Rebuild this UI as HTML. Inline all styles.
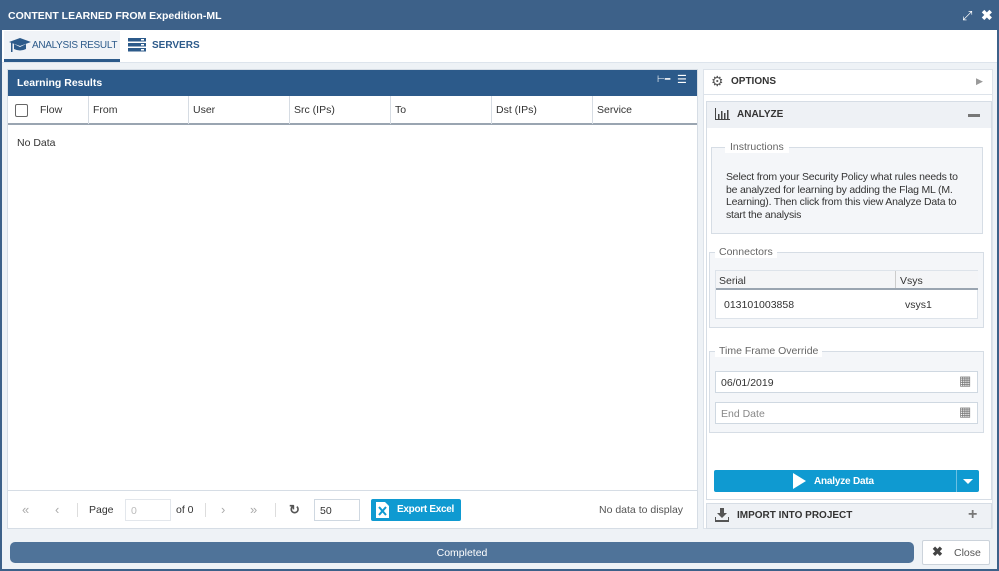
<!DOCTYPE html>
<html><head><style>
*{box-sizing:border-box;margin:0;padding:0}
body{width:999px;height:571px;overflow:hidden;font-family:"Liberation Sans",sans-serif;font-size:10.5px;color:#333;background:#fff;position:relative}
.a{position:absolute;white-space:nowrap}
.frame{left:0;top:0;width:999px;height:571px;border:2px solid #3d6189;border-top:none;background:#eef2f6}
.title{left:0;top:0;width:999px;height:30px;background:#3d6189;color:#fff;font-weight:bold;font-size:10.5px;padding:10px 0 0 8px}
.tabs{left:2px;top:30px;width:995px;height:33px;background:#fff;border-bottom:1px solid #dde4ec}
.col{position:absolute;top:0;height:28px;border-right:1px solid #d6dce3;padding:8px 0 0 4px}
.box{background:#fff;border:1px solid #d6dde5}
.field{position:absolute;border:1px solid #cfd8e1;background:#fff;height:22px;padding:5px 0 0 5px;white-space:nowrap}
</style></head><body>
<div class="a frame"></div>
<div class="a title">CONTENT LEARNED FROM Expedition-ML</div>
<div class="a" style="left:962px;top:8px;color:#fff;font-size:13px">⤢</div>
<div class="a" style="left:981px;top:7px;color:#fff;font-size:14px;font-weight:bold">✖</div>
<div class="a tabs"></div>
<div class="a" style="left:4px;top:31px;width:116px;height:31px;background:#f0f3f7;border-bottom:3px solid #2c5a8a"></div>
<svg class="a" style="left:9px;top:37px" width="22" height="16" viewBox="0 0 22 16"><path d="M11 1 L22 5 L11 9 L0 5Z" fill="#2c5a8a"/><path d="M5 7 V12 Q11 15 17 12 V7 L11 10Z" fill="#2c5a8a"/><rect x="2" y="5" width="1.5" height="10" fill="#2c5a8a"/></svg>
<div class="a" style="left:32px;top:40px;color:#2c5a8a;font-size:10px;letter-spacing:-0.3px">ANALYSIS RESULT</div>
<svg class="a" style="left:128px;top:38px" width="18" height="14"><rect x="0" y="0" width="18" height="3.5" fill="#2c5a8a"/><rect x="0" y="5" width="18" height="3.5" fill="#2c5a8a"/><rect x="0" y="10" width="18" height="3.5" fill="#2c5a8a"/><rect x="13" y="1" width="3" height="1.5" fill="#fff"/><rect x="13" y="6" width="3" height="1.5" fill="#fff"/><rect x="13" y="11" width="3" height="1.5" fill="#fff"/></svg>
<div class="a" style="left:152px;top:40px;color:#2c5a8a;font-size:10px;font-weight:bold">SERVERS</div>

<div class="a box" style="left:7px;top:69px;width:691px;height:460px"></div>
<div class="a" style="left:8px;top:70px;width:689px;height:26px;background:#2c5a8a;color:#fff;font-weight:bold;padding:7px 0 0 9px">Learning Results</div>
<div class="a" style="left:657px;top:74px;color:#fff;font-size:9px">⊢━</div>
<div class="a" style="left:677px;top:73px;color:#fff;font-size:11px">☰</div>
<div class="a" style="left:8px;top:96px;width:689px;height:29px;border-bottom:2px solid #9aa5b1;background:#fff">
 <div class="col" style="left:0;width:81px;padding-left:32px">Flow</div>
 <div class="a" style="left:7px;top:8px;width:13px;height:13px;border:1px solid #666;border-radius:2px"></div>
 <div class="col" style="left:81px;width:100px">From</div>
 <div class="col" style="left:181px;width:101px">User</div>
 <div class="col" style="left:282px;width:101px">Src (IPs)</div>
 <div class="col" style="left:383px;width:101px">To</div>
 <div class="col" style="left:484px;width:101px">Dst (IPs)</div>
 <div class="col" style="left:585px;width:104px;border-right:none">Service</div>
</div>
<div class="a" style="left:17px;top:137px">No Data</div>
<div class="a" style="left:8px;top:490px;width:689px;height:38px;border-top:1px solid #d6dde5;background:#fff"></div>
<div class="a" style="left:22px;top:502px;color:#aaa;font-size:13px">«</div>
<div class="a" style="left:55px;top:502px;color:#aaa;font-size:13px">‹</div>
<div class="a" style="left:77px;top:503px;width:1px;height:14px;background:#ddd"></div>
<div class="a" style="left:89px;top:504px">Page</div>
<div class="field" style="left:125px;top:499px;width:46px;color:#bbb;border-color:#e3e7ec">0</div>
<div class="a" style="left:176px;top:504px">of 0</div>
<div class="a" style="left:205px;top:503px;width:1px;height:14px;background:#ddd"></div>
<div class="a" style="left:221px;top:502px;color:#aaa;font-size:13px">›</div>
<div class="a" style="left:250px;top:502px;color:#aaa;font-size:13px">»</div>
<div class="a" style="left:275px;top:503px;width:1px;height:14px;background:#ddd"></div>
<div class="a" style="left:289px;top:502px;color:#555;font-size:13px;font-weight:bold">↻</div>
<div class="field" style="left:314px;top:499px;width:46px;color:#333">50</div>
<div class="a" style="left:371px;top:499px;width:90px;height:22px;background:#0f9ad1;border-radius:2px;color:#fff;font-weight:bold;font-size:10px;letter-spacing:-0.3px;padding:5px 0 0 26px">Export Excel</div>
<svg class="a" style="left:376px;top:502px" width="13" height="16"><path d="M0 0H9L13 4V16H0Z" fill="#fff"/><path d="M3 5L10 13M10 5L3 13" stroke="#0f9ad1" stroke-width="2"/></svg>
<div class="a" style="left:599px;top:504px;color:#555">No data to display</div>

<div class="a" style="left:703px;top:69px;width:290px;height:460px;background:#fff;border:1px solid #dde3ea"></div>
<div class="a" style="left:704px;top:70px;width:288px;height:25px;background:#fff;border-bottom:1px solid #dde3ea"></div>
<div class="a" style="left:711px;top:73px;color:#555;font-size:14px">⚙</div>
<div class="a" style="left:731px;top:76px;font-weight:bold;color:#333;font-size:10px">OPTIONS</div>
<div class="a" style="left:976px;top:76px;color:#999;font-size:9px">▶</div>
<div class="a" style="left:706px;top:101px;width:286px;height:399px;border:1px solid #d6dde5;background:#fff"></div>
<div class="a" style="left:707px;top:102px;width:284px;height:26px;background:#eef1f5"></div>
<svg class="a" style="left:715px;top:108px" width="15" height="12"><path d="M0.5 0V11.5H15" stroke="#444" fill="none"/><rect x="3" y="6" width="1.5" height="5" fill="#444"/><rect x="6" y="3" width="1.5" height="8" fill="#444"/><rect x="9" y="5" width="1.5" height="6" fill="#444"/><rect x="12" y="2" width="1.5" height="9" fill="#444"/></svg>
<div class="a" style="left:737px;top:109px;font-weight:bold;font-size:10px">ANALYZE</div>
<div class="a" style="left:968px;top:114px;width:12px;height:3px;background:#777"></div>

<div class="a" style="left:711px;top:147px;width:272px;height:87px;border:1px solid #d6dde5;background:#f4f6f9"></div>
<div class="a" style="left:725px;top:141px;background:#fff;padding:0 5px;color:#666">Instructions</div>
<div class="a" style="left:726px;top:171px;width:236px;line-height:12.5px;font-size:10.5px;letter-spacing:-0.2px;color:#333;white-space:normal">Select from your Security Policy what rules needs to be analyzed for learning by adding the Flag ML (M. Learning). Then click from this view Analyze Data to start the analysis</div>

<div class="a" style="left:709px;top:252px;width:275px;height:76px;border:1px solid #d6dde5;background:#f4f6f9"></div>
<div class="a" style="left:715px;top:246px;background:#fff;padding:0 4px;color:#666">Connectors</div>
<div class="a" style="left:715px;top:270px;width:263px;height:49px;background:#fff;border:1px solid #dde3ea"></div>
<div class="a" style="left:716px;top:271px;width:262px;height:19px;background:#f4f5f7;border-bottom:2px solid #9aa5b1"></div>
<div class="a" style="left:895px;top:271px;width:1px;height:17px;background:#ccc"></div>
<div class="a" style="left:719px;top:275px">Serial</div>
<div class="a" style="left:900px;top:275px">Vsys</div>
<div class="a" style="left:724px;top:299px">013101003858</div>
<div class="a" style="left:905px;top:299px">vsys1</div>

<div class="a" style="left:709px;top:351px;width:275px;height:82px;border:1px solid #d6dde5;background:#f4f6f9"></div>
<div class="a" style="left:715px;top:345px;background:#fff;padding:0 4px;color:#666">Time Frame Override</div>
<div class="field" style="left:715px;top:371px;width:263px">06/01/2019</div>
<div class="field" style="left:715px;top:402px;width:263px;color:#888">End Date</div>
<div class="a" style="left:959px;top:373px;color:#777;font-size:13px">▦</div>
<div class="a" style="left:959px;top:404px;color:#777;font-size:13px">▦</div>

<div class="a" style="left:714px;top:470px;width:265px;height:22px;background:#0f9ad1;border-radius:2px"></div>
<div class="a" style="left:956px;top:470px;width:1px;height:22px;background:#6cc0e3"></div>
<div class="a" style="left:793px;top:473px;width:0;height:0;border-left:13px solid #fff;border-top:8px solid transparent;border-bottom:8px solid transparent"></div>
<div class="a" style="left:814px;top:476px;color:#fff;font-weight:bold;font-size:10px;letter-spacing:-0.2px">Analyze Data</div>
<div class="a" style="left:963px;top:479px;width:0;height:0;border-top:5px solid #fff;border-left:5px solid transparent;border-right:5px solid transparent"></div>

<div class="a" style="left:706px;top:503px;width:286px;height:26px;background:#eef1f5;border:1px solid #d6dde5"></div>
<svg class="a" style="left:715px;top:508px" width="14" height="14"><path d="M5 0H9V5H12L7 10L2 5H5Z" fill="#555"/><path d="M0 9V13H14V9" stroke="#555" stroke-width="2" fill="none"/></svg>
<div class="a" style="left:737px;top:510px;font-weight:bold;font-size:10px">IMPORT INTO PROJECT</div>
<div class="a" style="left:968px;top:506px;color:#777;font-size:16px;font-weight:bold">+</div>

<div class="a" style="left:10px;top:542px;width:904px;height:21px;background:#4f7399;border-radius:5px;color:#fff;text-align:center;padding-top:5px">Completed</div>
<div class="a" style="left:922px;top:540px;width:68px;height:25px;background:#fff;border:1px solid #ccd3db;border-radius:2px;color:#555;padding:6px 0 0 31px">Close</div>
<div class="a" style="left:932px;top:544px;font-size:13px;color:#444;font-weight:bold">✖</div>
</body></html>
